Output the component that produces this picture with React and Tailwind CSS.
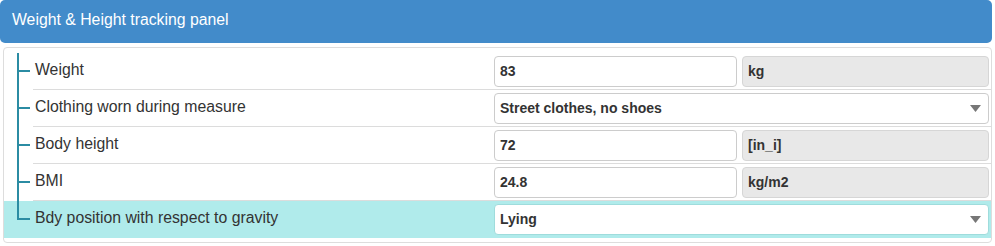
const rows = [
  { label: "Weight", value: "83", unit: "kg" },
  { label: "Clothing worn during measure", value: "Street clothes, no shoes", select: true },
  { label: "Body height", value: "72", unit: "[in_i]" },
  { label: "BMI", value: "24.8", unit: "kg/m2" },
  { label: "Bdy position with respect to gravity", value: "Lying", select: true, active: true },
];

function Caret() {
  return (
    <svg width="11" height="7" viewBox="0 0 11 7" className="shrink-0">
      <path d="M0 0h11L5.5 7z" fill="#777" />
    </svg>
  );
}

function Row({ row, last }) {
  return (
    <div className={`flex h-[37px] ${row.active ? "bg-[#b0ebeb]" : ""}`}>
      {/* tree connector */}
      <div className="w-[29px] shrink-0 pl-[13px] flex flex-col">
        <div className="w-[13px] h-[19px] border-l-2 border-b-2 border-[#2b8ca3]" />
        {!last && <div className="flex-1 border-l-2 border-[#2b8ca3]" />}
      </div>
      <div
        className={`flex-1 flex items-center pr-[2px] ${
          last ? "" : "border-b border-[#dcdcdc]"
        }`}
      >
        <div className="w-[461px] shrink-0 pl-[2px] pb-[3px] text-[15.8px] text-[#333]">{row.label}</div>
        {row.select ? (
          <div
            className={`flex-1 h-[31px] flex items-center justify-between bg-white rounded-[4px] border pl-[5px] pr-[7px] text-[14px] font-bold text-[#333] ${
              row.active ? "border-[#9fdcdc]" : "border-[#cccccc]"
            }`}
          >
            <span>{row.value}</span>
            <Caret />
          </div>
        ) : (
          <div className="flex-1 flex gap-[5px]">
            <div className="w-[243px] h-[31px] flex items-center bg-white rounded-[4px] border border-[#cccccc] pl-[5px] text-[14px] font-bold text-[#333]">
              {row.value}
            </div>
            <div className="flex-1 h-[31px] flex items-center bg-[#e8e8e8] rounded-[4px] border border-[#d6d6d6] pl-[5px] text-[14px] font-bold text-[#333]">
              {row.unit}
            </div>
          </div>
        )}
      </div>
    </div>
  );
}

export default function App() {
  return (
    <div className="w-[995px] h-[246px] bg-white font-['Liberation_Sans',Arial,sans-serif]">
      <div className="w-[992px] h-[43px] rounded-[5px] bg-[#428bca] flex items-center pl-[12px] pb-[3px] text-[15.8px] text-white">
        Weight &amp; Height tracking panel
      </div>
      <div className="ml-[3px] mt-[4px] w-[989px] h-[196px] border border-[#dddddd] rounded-[4px] pt-[5px]">
        {rows.map((row, i) => (
          <Row key={row.label} row={row} last={i === rows.length - 1} />
        ))}
      </div>
    </div>
  );
}
